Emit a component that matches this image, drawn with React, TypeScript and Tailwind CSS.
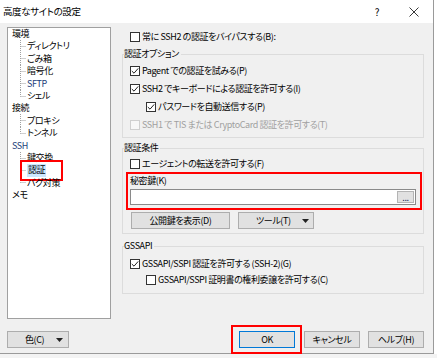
import type { ReactNode } from "react";

type TreeItem = { label: string; child?: boolean; last?: boolean; latin?: boolean; selected?: boolean };

const treeItems: TreeItem[] = [
  { label: "環境" },
  { label: "ディレクトリ", child: true },
  { label: "ごみ箱", child: true },
  { label: "暗号化", child: true },
  { label: "SFTP", child: true, latin: true },
  { label: "シェル", child: true, last: true },
  { label: "接続" },
  { label: "プロキシ", child: true },
  { label: "トンネル", child: true, last: true },
  { label: "SSH", latin: true },
  { label: "鍵交換", child: true },
  { label: "認証", child: true, selected: true },
  { label: "バグ対策", child: true, last: true },
  { label: "メモ" },
];

function Branch({ last }: { last?: boolean }) {
  return (
    <svg width="15" height="13" className="shrink-0 overflow-visible">
      <path
        d={`M8.5 0 V${last ? 6.5 : 13} M8.5 6.5 H14`}
        stroke="#a0a0a0"
        strokeWidth="1"
        strokeDasharray="1 1"
        fill="none"
      />
    </svg>
  );
}

function Checkbox({ checked, disabled }: { checked?: boolean; disabled?: boolean }) {
  return (
    <span
      className={`flex h-[10px] w-[10px] shrink-0 items-center justify-center border ${
        disabled ? "border-[#cfcfcf] bg-[#f7f7f7]" : "border-[#333333] bg-white"
      }`}
    >
      {checked && (
        <svg width="8" height="8" viewBox="0 0 8 8">
          <path d="M0.8 4 L3 6.2 L7.2 1.4" stroke="#222" strokeWidth="1" fill="none" />
        </svg>
      )}
    </span>
  );
}

function CheckRow({
  label,
  checked,
  disabled,
  indent,
  height = "h-[18px]",
}: {
  label: string;
  checked?: boolean;
  disabled?: boolean;
  indent?: boolean;
  height?: string;
}) {
  return (
    <div className={`flex items-center gap-[2px] ${height} ${indent ? "pl-[16px]" : ""}`}>
      <Checkbox checked={checked} disabled={disabled} />
      <span className={disabled ? "text-[#a0a0a0]" : "text-black"}>{label}</span>
    </div>
  );
}

function Group({ title, className, children }: { title: string; className?: string; children: ReactNode }) {
  return (
    <fieldset className={`min-w-0 border border-[#dcdcdc] px-0 ${className ?? ""}`}>
      <legend className="ml-[1px] px-0 pr-[2px] leading-[12px] text-black">{title}</legend>
      <div className="px-[7px]">{children}</div>
    </fieldset>
  );
}

function Caret() {
  return (
    <svg width="7" height="4" viewBox="0 0 7 4">
      <path d="M0 0 H7 L3.5 4 Z" fill="#222" />
    </svg>
  );
}

function Button({ children, className }: { children: ReactNode; className?: string }) {
  return (
    <div
      className={`flex h-[17px] items-center justify-center border border-[#adadad] bg-[#e1e1e1] ${className ?? ""}`}
    >
      {children}
    </div>
  );
}

export default function App() {
  return (
    <div className="flex h-[358px] w-[437px] flex-col overflow-hidden bg-[#f3f3f3] font-['Noto_Sans_CJK_JP',sans-serif] text-[9px] tracking-[-0.4px] text-black [font-feature-settings:'palt']">
      <div className="flex">
        <div className="flex h-[354px] w-[434px] shrink-0 flex-col border-r border-b border-[#9a9a9a]">
          {/* title bar */}
          <div className="flex h-[23px] shrink-0 items-center bg-white pl-[3px]">
            <span className="text-[9.5px]">高度なサイトの設定</span>
            <span className="ml-auto mr-[30px] text-[10px]">?</span>
            <svg width="10" height="10" viewBox="0 0 10 10" className="mr-[14px]">
              <path d="M0.5 0.5 L9.5 9.5 M9.5 0.5 L0.5 9.5" stroke="#222" strokeWidth="0.9" />
            </svg>
          </div>

          {/* body */}
          <div className="flex flex-1 flex-col bg-[#f0f0f0] pt-[4px] pl-[7px]">
            <div className="flex gap-[11px]">
              {/* tree */}
              <div className="h-[292px] w-[104px] shrink-0 border border-[#a0a0a0] bg-white pl-[4px]">
                {treeItems.map((item) => (
                  <div key={item.label} className="flex h-[12.4px] items-center leading-[12.4px]">
                    {item.child && <Branch last={item.last} />}
                    <span
                      className={`relative ${item.latin ? "text-[#22407a]" : ""} ${
                        item.selected ? "bg-[#cce8ff] px-[1px]" : ""
                      }`}
                    >
                      {item.label}
                      {item.selected && (
                        <span className="absolute -top-[4px] -right-[17px] -bottom-[4px] -left-[7px] border-2 border-[#ff0000]" />
                      )}
                    </span>
                  </div>
                ))}
              </div>

              {/* settings */}
              <div className="flex w-[302px] flex-col">
                <div className="mt-[3px] pl-[8px]">
                  <CheckRow label="常に SSH2 の認証をバイパスする(B):" height="h-[14px]" />
                </div>

                <Group title="認証オプション" className="mt-[4px] pb-[3px]">
                  <div className="mt-[2px]">
                    <CheckRow label="Pagent での認証を試みる(P)" checked />
                    <CheckRow label="SSH2 でキーボードによる認証を許可する(I)" checked />
                    <CheckRow label="パスワードを自動送信する(P)" checked indent />
                    <CheckRow label="SSH1 で TIS または CryptoCard 認証を許可する(T)" disabled />
                  </div>
                </Group>

                <Group title="認証条件" className="mt-[4px] pb-[4px]">
                  <div className="mt-[1px]">
                    <CheckRow label="エージェントの転送を許可する(F)" />
                  </div>
                  <div className="relative mt-[1px]">
                    <div className="flex h-[14px] items-center">秘密鍵(K)</div>
                    <div className="mt-[1px] flex h-[16px] items-center justify-end border border-[#8a8a8a] bg-white pr-[1px]">
                      <div className="flex h-[12px] w-[17px] items-center justify-center border border-[#b4b4b4] bg-[#e1e1e1] text-[#1d2b5c] leading-none">
                        ...
                      </div>
                    </div>
                    <span className="absolute -top-[2px] -right-[6px] -bottom-[5px] -left-[4px] border-2 border-[#ff0000]" />
                  </div>
                  <div className="mt-[7px] flex gap-[8px] pl-[1px]">
                    <Button className="h-[16px] w-[99px]">公開鍵を表示(D)</Button>
                    <Button className="h-[16px] w-[76px] !justify-start pl-[17px]">
                      <span>ツール(T)</span>
                      <span className="ml-auto mr-[4px] flex">
                        <Caret />
                      </span>
                    </Button>
                  </div>
                </Group>

                <Group title="GSSAPI" className="mt-[6px] pb-[5px]">
                  <div className="mt-[4px]">
                    <CheckRow label="GSSAPI/SSPI 認証を許可する (SSH-2)(G)" checked height="h-[16px]" />
                    <CheckRow label="GSSAPI/SSPI 証明書の権利委譲を許可する(C)" indent height="h-[16px]" />
                  </div>
                </Group>
              </div>
            </div>

            {/* bottom buttons */}
            <div className="mt-[12px] flex items-center pr-[9px]">
              <Button className="w-[62px] !justify-start pl-[17px]">
                <span>色(C)</span>
                <span className="ml-auto mr-[5px] flex">
                  <Caret />
                </span>
              </Button>
              <div className="relative ml-auto">
                <Button className="w-[56px] !border-[#0078d7]">OK</Button>
                <span className="absolute -top-[6px] -right-[7px] -bottom-[6px] -left-[8px] border-2 border-[#ff0000]" />
              </div>
              <Button className="ml-[9px] w-[56px]">キャンセル</Button>
              <Button className="ml-[8px] w-[56px]">ヘルプ(H)</Button>
            </div>
          </div>
        </div>
        <div className="h-[354px] flex-1 bg-white" />
      </div>
    </div>
  );
}
